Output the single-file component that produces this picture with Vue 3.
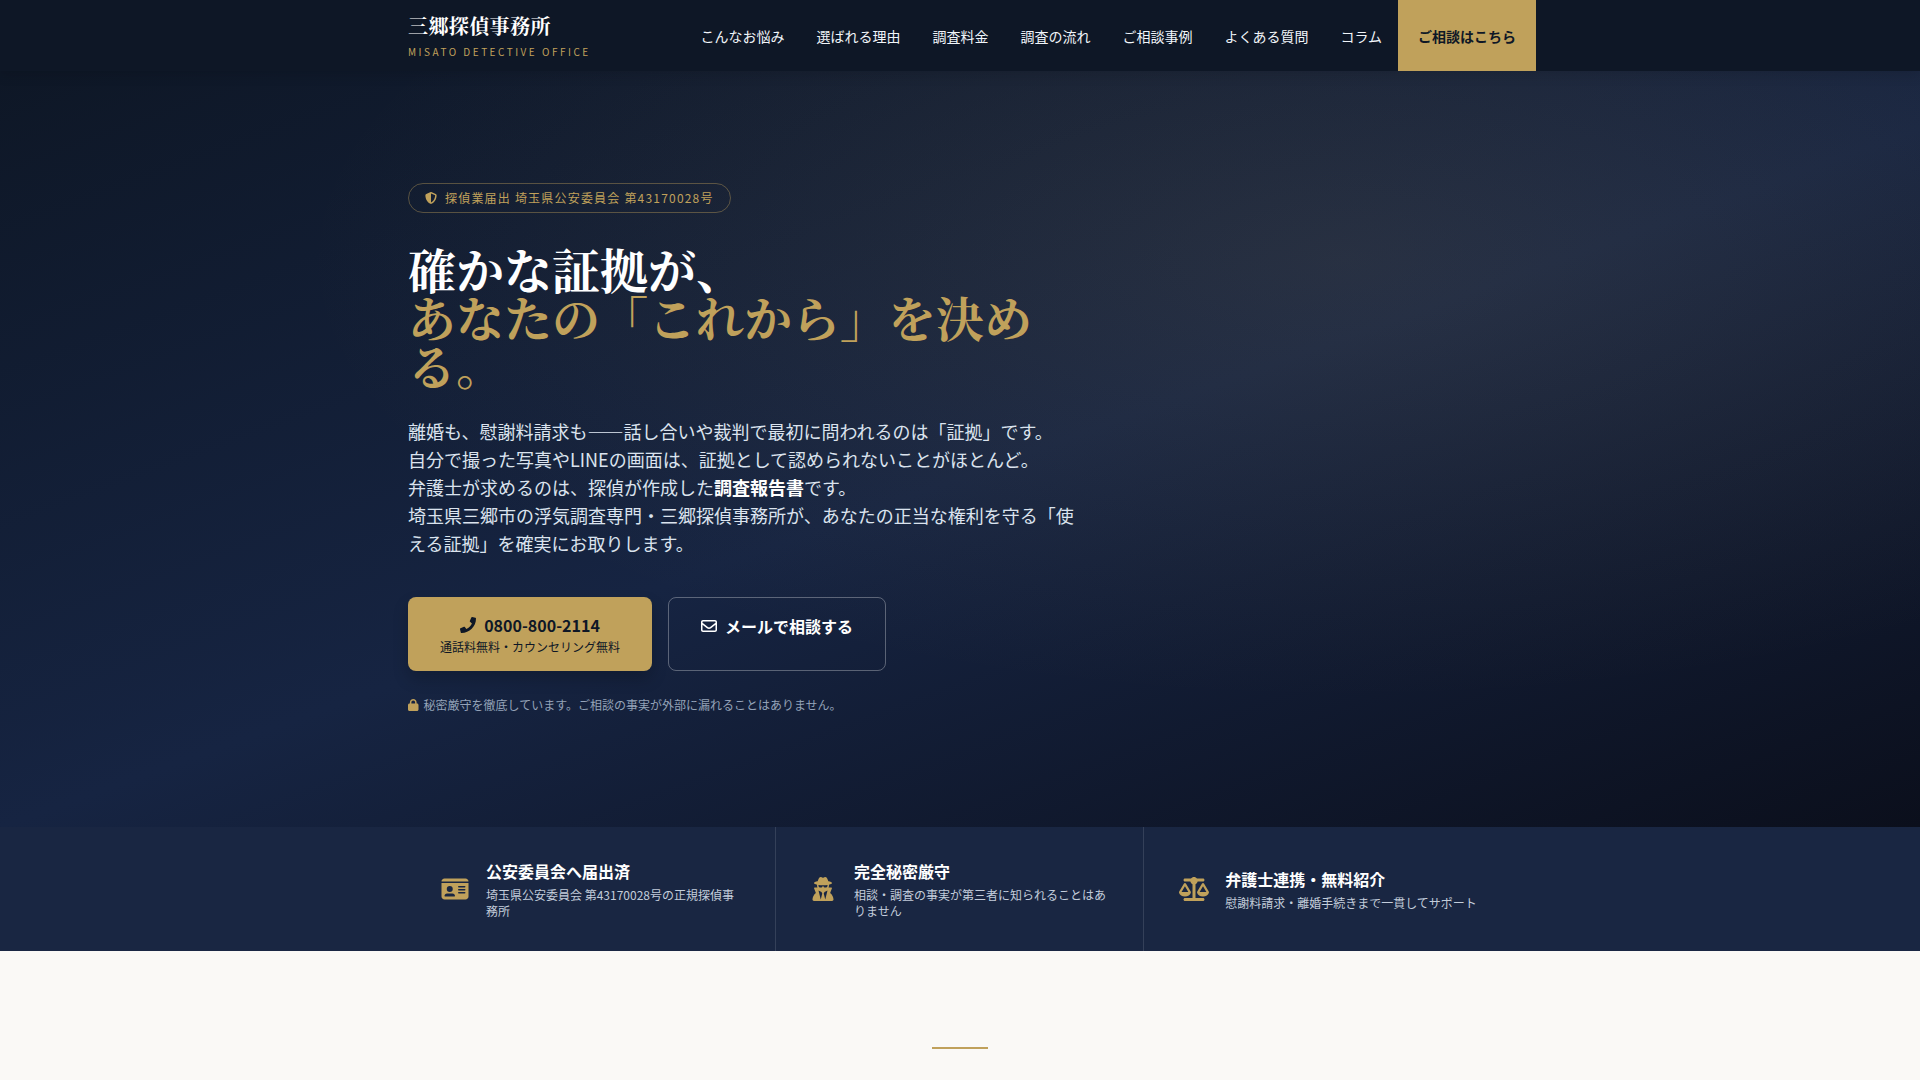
<script setup>
const navItems = [
  { label: "こんなお悩み", href: "#worries" },
  { label: "選ばれる理由", href: "#reasons" },
  { label: "調査料金", href: "#price" },
  { label: "調査の流れ", href: "#flow" },
  { label: "ご相談事例", href: "#cases" },
  { label: "よくある質問", href: "#faq" },
  { label: "コラム", href: "#column" },
];

const trustItems = [
  {
    title: "公安委員会へ届出済",
    text: "埼玉県公安委員会 第43170028号の正規探偵事務所",
    viewBox: "0 0 576 512",
    path: "M0 96l576 0c0-35.3-28.7-64-64-64H64C28.7 32 0 60.7 0 96zm0 32V416c0 35.3 28.7 64 64 64H512c35.3 0 64-28.7 64-64V128H0zM64 405.3c0-29.5 23.9-53.3 53.3-53.3H234.7c29.5 0 53.3 23.9 53.3 53.3c0 5.9-4.8 10.7-10.7 10.7H74.7c-5.9 0-10.7-4.8-10.7-10.7zM176 192a64 64 0 1 1 0 128 64 64 0 1 1 0-128zm176 16c0-8.8 7.2-16 16-16H496c8.8 0 16 7.2 16 16s-7.2 16-16 16H368c-8.8 0-16-7.2-16-16zm0 64c0-8.8 7.2-16 16-16H496c8.8 0 16 7.2 16 16s-7.2 16-16 16H368c-8.8 0-16-7.2-16-16zm0 64c0-8.8 7.2-16 16-16H496c8.8 0 16 7.2 16 16s-7.2 16-16 16H368c-8.8 0-16-7.2-16-16z",
  },
  {
    title: "完全秘密厳守",
    text: "相談・調査の事実が第三者に知られることはありません",
    viewBox: "0 0 448 512",
    path: "M224 16c-6.7 0-10.8-2.8-15.5-6.1C201.9 5.4 194 0 176 0c-30.5 0-52 43.7-66 89.4C62.7 98.1 32 112.2 32 128c0 14.3 25 27.1 64.6 35.9c-.4 4-.6 8-.6 12.1c0 17 3.3 33.2 9.3 48H45.4C38 224 32 230 32 237.4c0 1.7 .3 3.4 1 5l38.8 96.9C28.2 371.8 0 423.8 0 482.3C0 498.7 13.3 512 29.7 512H418.3c16.4 0 29.7-13.3 29.7-29.7c0-58.5-28.2-110.4-71.7-143L415 242.4c.6-1.6 1-3.3 1-5c0-7.4-6-13.4-13.4-13.4H342.7c6-14.8 9.3-31 9.3-48c0-4.1-.2-8.1-.6-12.1C391 155.1 416 142.3 416 128c0-15.8-30.7-29.9-78-38.6C324 43.7 302.5 0 272 0c-18 0-25.9 5.4-32.5 9.9c-4.8 3.3-8.8 6.1-15.5 6.1zm56 208H267.6c-16.5 0-31.1-10.6-36.3-26.2c-2.3-7-12.2-7-14.5 0c-5.2 15.6-19.9 26.2-36.3 26.2H168c-22.1 0-40-17.9-40-40V169.6c28.2 4.1 61 6.4 96 6.4s67.8-2.3 96-6.4V184c0 22.1-17.9 40-40 40zm-88 96l16 32L176 480 128 288l64 32zm128-32L272 480 240 352l16-32 64-32z",
  },
  {
    title: "弁護士連携・無料紹介",
    text: "慰謝料請求・離婚手続きまで一貫してサポート",
    viewBox: "0 0 640 512",
    path: "M384 32H512c17.7 0 32 14.3 32 32s-14.3 32-32 32H398.4c-5.2 25.8-22.9 47.1-46.4 57.3V448H512c17.7 0 32 14.3 32 32s-14.3 32-32 32H320 128c-17.7 0-32-14.3-32-32s14.3-32 32-32H288V153.3c-23.5-10.3-41.2-31.6-46.4-57.3H128c-17.7 0-32-14.3-32-32s14.3-32 32-32H256c14.6-19.4 37.8-32 64-32s49.4 12.6 64 32zm55.6 288H584.4L512 195.8 439.6 320zM512 416c-62.9 0-115.2-34-126-78.9c-2.6-11 1-22.3 6.7-32.1l95.2-163.2c5-8.6 14.2-13.8 24.1-13.8s19.1 5.3 24.1 13.8l95.2 163.2c5.7 9.8 9.3 21.1 6.7 32.1C627.2 382 574.9 416 512 416zM126.8 195.8L54.4 320H199.3L126.8 195.8zM.9 337.1c-2.6-11 1-22.3 6.7-32.1l95.2-163.2c5-8.6 14.2-13.8 24.1-13.8s19.1 5.3 24.1 13.8l95.2 163.2c5.7 9.8 9.3 21.1 6.7 32.1C242 382 189.7 416 126.8 416S11.7 382 .9 337.1z",
  },
];
</script>

<template>
  <header class="site-header">
    <div class="header-inner">
      <a href="#" class="logo">
        <span class="logo-name">三郷探偵事務所</span>
        <span class="logo-sub">MISATO DETECTIVE OFFICE</span>
      </a>
      <nav>
        <a v-for="item in navItems" :key="item.href" :href="item.href">{{ item.label }}</a>
        <a href="#contact" class="nav-cta">ご相談はこちら</a>
      </nav>
    </div>
  </header>

  <main>
    <section class="hero">
      <div class="container">
        <div class="hero-content">
          <p class="badge">
            <svg class="icon" viewBox="0 0 512 512" aria-hidden="true">
              <path d="M256 0c4.6 0 9.2 1 13.4 2.9L457.7 82.8c22 9.3 38.4 31 38.3 57.2c-.5 99.2-41.3 280.7-213.6 363.2c-16.7 8-36.1 8-52.8 0C57.3 420.7 16.5 239.2 16 140c-.1-26.2 16.3-47.9 38.3-57.2L242.7 2.9C246.8 1 251.4 0 256 0zm0 66.8V444.8C394 378 431.1 230.1 432 141.4L256 66.8l0 0z" />
            </svg>
            <span>探偵業届出 埼玉県公安委員会 第43170028号</span>
          </p>
          <h1>
            確かな証拠が、<br />
            <span>あなたの「これから」を決める。</span>
          </h1>
          <p class="lead">
            離婚も、慰謝料請求も――話し合いや裁判で最初に問われるのは「証拠」です。<br />
            自分で撮った写真やLINEの画面は、証拠として認められないことがほとんど。<br />
            弁護士が求めるのは、探偵が作成した<strong>調査報告書</strong>です。<br />
            埼玉県三郷市の浮気調査専門・三郷探偵事務所が、あなたの正当な権利を守る「使える証拠」を確実にお取りします。
          </p>
          <div class="actions">
            <a href="tel:0800-800-2114" class="btn btn-gold">
              <span class="btn-main">
                <svg class="icon" viewBox="0 0 512 512" aria-hidden="true">
                  <path d="M493.4 24.6l-104-24c-11.3-2.6-22.9 3.3-27.5 13.9l-48 112c-4.2 9.8-1.4 21.3 6.9 28l60.6 49.6c-36 76.7-98.9 140.5-177.2 177.2l-49.6-60.6c-6.8-8.3-18.2-11.1-28-6.9l-112 48C3.9 366.5-2 378.1.6 389.4l24 104C27.1 504.2 36.7 512 48 512c256.1 0 464-207.5 464-464 0-11.2-7.7-20.9-18.6-23.4z" />
                </svg>
                0800-800-2114
              </span>
              <span class="btn-sub">通話料無料・カウンセリング無料</span>
            </a>
            <a href="#contact" class="btn btn-outline">
              <span class="btn-main">
                <svg class="icon" viewBox="0 0 512 512" aria-hidden="true">
                  <path d="M64 112c-8.8 0-16 7.2-16 16v22.1L220.5 291.7c20.7 17 50.4 17 71.1 0L464 150.1V128c0-8.8-7.2-16-16-16H64zM48 212.2V384c0 8.8 7.2 16 16 16H448c8.8 0 16-7.2 16-16V212.2L322 328.8c-38.4 31.5-93.7 31.5-132 0L48 212.2zM0 128C0 92.7 28.7 64 64 64H448c35.3 0 64 28.7 64 64V384c0 35.3-28.7 64-64 64H64c-35.3 0-64-28.7-64-64V128z" />
                </svg>
                メールで相談する
              </span>
            </a>
          </div>
          <p class="note">
            <svg class="icon" viewBox="0 0 448 512" aria-hidden="true">
              <path d="M144 144v48H304V144c0-44.2-35.8-80-80-80s-80 35.8-80 80zM80 192V144C80 64.5 144.5 0 224 0s144 64.5 144 144v48h16c35.3 0 64 28.7 64 64V448c0 35.3-28.7 64-64 64H64c-35.3 0-64-28.7-64-64V256c0-35.3 28.7-64 64-64H80z" />
            </svg>
            <span>秘密厳守を徹底しています。ご相談の事実が外部に漏れることはありません。</span>
          </p>
        </div>
      </div>
    </section>

    <section class="trust">
      <div class="container trust-grid">
        <div v-for="item in trustItems" :key="item.title" class="trust-item">
          <svg class="trust-icon" :viewBox="item.viewBox" aria-hidden="true">
            <path :d="item.path" />
          </svg>
          <div>
            <p class="trust-title">{{ item.title }}</p>
            <p class="trust-text">{{ item.text }}</p>
          </div>
        </div>
      </div>
    </section>

    <section id="worries" class="worries">
      <div class="gold-line"></div>
    </section>
  </main>
</template>

<style>
body {
  margin: 0;
  background-color: #faf9f6;
  font-family: "Noto Sans CJK JP", sans-serif;
}
</style>

<style scoped>
p,
h1 {
  margin: 0;
}

a {
  color: inherit;
  text-decoration: none;
}

.container,
.header-inner {
  width: 100%;
  max-width: 1152px;
  margin: 0 auto;
  padding: 0 24px;
  box-sizing: border-box;
}

.icon {
  height: 1em;
  fill: currentColor;
  flex-shrink: 0;
}

.site-header {
  position: sticky;
  top: 0;
  z-index: 10;
  background-color: #0e1726;
  box-shadow: 0 4px 12px rgba(0, 0, 0, 0.12);
}

.header-inner {
  display: flex;
  justify-content: space-between;
  align-items: center;
  min-height: 71px;
  padding-right: 0;
}

.logo {
  display: flex;
  flex-direction: column;
}

.logo-name {
  font-family: "Noto Serif CJK JP", "Noto Serif JP", "Noto Sans CJK JP", serif;
  font-size: 20px;
  line-height: 28px;
  font-weight: 700;
  letter-spacing: 0.02em;
  color: #fff;
}

.logo-sub {
  margin-top: 4px;
  font-size: 10px;
  line-height: 16px;
  letter-spacing: 0.25em;
  color: #c0a15b;
}

nav {
  display: flex;
  align-self: stretch;
}

nav a {
  display: flex;
  align-items: center;
  padding: 0 16px;
  font-size: 14px;
  line-height: 20px;
  color: #f1f5f9;
}

nav .nav-cta {
  padding: 0 20px;
  background-color: #c0a15b;
  color: #0e1726;
  font-weight: 700;
}

.hero {
  display: flex;
  align-items: center;
  min-height: 70vh;
  background:
    radial-gradient(ellipse at 70% 25%, rgba(192, 161, 91, 0.11), transparent 55%),
    linear-gradient(160deg, #0e1726 0%, #162442 52%, #0b0f1c 100%);
}

.hero-content {
  max-width: 672px;
}

.badge {
  display: inline-flex;
  align-items: center;
  gap: 8px;
  padding: 6px 16px;
  border: 1px solid rgba(192, 161, 91, 0.4);
  border-radius: 999px;
  font-size: 12px;
  line-height: 16px;
  letter-spacing: 0.1em;
  color: #c0a15b;
}

h1 {
  margin-top: 32px;
  font-family: "Noto Serif CJK JP", "Noto Serif JP", "Noto Sans CJK JP", serif;
  font-size: 48px;
  line-height: 48px;
  font-weight: 700;
  color: #fff;
}

h1 span {
  color: #c0a15b;
}

.lead {
  margin-top: 28px;
  font-size: 18px;
  line-height: 28px;
  color: #dbe3ee;
}

.lead strong {
  color: #fff;
}

.actions {
  display: flex;
  flex-wrap: wrap;
  gap: 16px;
  margin-top: 40px;
}

.btn {
  display: flex;
  flex-direction: column;
  align-items: center;
  padding: 16px 32px;
  border-radius: 8px;
}

.btn-main {
  display: flex;
  align-items: center;
  gap: 8px;
  font-size: 16px;
  line-height: 24px;
  font-weight: 700;
}

.btn-sub {
  margin-top: 2px;
  font-size: 12px;
  line-height: 16px;
}

.btn-gold {
  background-color: #c0a15b;
  color: #0e1726;
  box-shadow: 0 8px 16px rgba(0, 0, 0, 0.2);
}

.btn-outline {
  border: 1px solid rgba(255, 255, 255, 0.3);
  color: #fff;
}

.note {
  display: flex;
  align-items: center;
  gap: 5px;
  margin-top: 24px;
  font-size: 12px;
  line-height: 20px;
  color: #94a3b8;
}

.note .icon {
  color: #c0a15b;
}

.trust {
  background-color: #192642;
}

.trust-grid {
  display: grid;
  grid-template-columns: repeat(3, 1fr);
}

.trust-item {
  display: flex;
  align-items: center;
  justify-content: center;
  gap: 16px;
  padding: 32px;
  border-right: 1px solid rgba(255, 255, 255, 0.12);
}

.trust-item:last-child {
  border-right: none;
}

.trust-icon {
  width: 30px;
  height: 24px;
  flex-shrink: 0;
  fill: #c0a15b;
}

.trust-title {
  font-size: 16px;
  line-height: 24px;
  font-weight: 700;
  color: #fff;
}

.trust-text {
  margin-top: 4px;
  font-size: 12px;
  line-height: 16px;
  color: #c3cddb;
}

.worries {
  padding: 96px 24px;
  background-color: #faf9f6;
}

.gold-line {
  width: 56px;
  height: 2px;
  margin: 0 auto;
  background-color: #c0a15b;
}
</style>
